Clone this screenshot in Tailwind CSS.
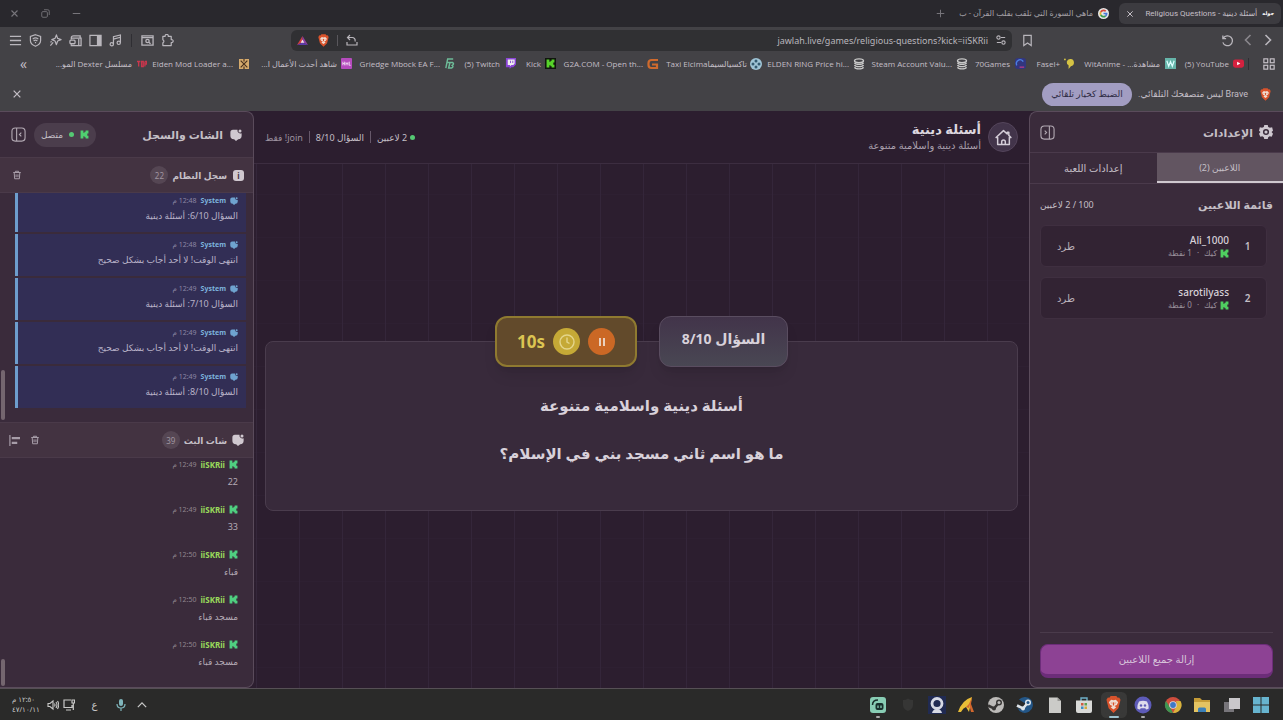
<!DOCTYPE html>
<html lang="ar" dir="rtl">
<head>
  <meta charset="UTF-8" />
  <meta name="viewport" content="width=device-width, initial-scale=1.0" />
  <title>أسئلة دينية - Religious Questions</title>
  <script src="https://cdn.jsdelivr.net/npm/@tailwindcss/browser@4"></script>
</head>
<body class="h-screen overflow-hidden flex flex-col bg-[#434246] text-[#c4bfc6] text-[10px] leading-[15px] font-['Noto_Sans','DejaVu_Sans',sans-serif]">

  <!-- Shared icons -->
  <svg class="hidden">
    <symbol id="kick" viewBox="0 0 16 16"><path fill="currentColor" d="M1 1h5v4h2V3h2V1h5v5h-2v4h2v5h-5v-2H8v-2H6v4H1z" /></symbol>
    <symbol id="brave" viewBox="0 0 16 18">
      <path fill="#d9532c" d="M5 0h6l1.5 1.7L14 1.5 15.5 4l-.5 2-1.8 7L8 18l-5.200-5L1 6 .5 4 2 1.500l1.500.2z" />
      <path fill="#f0dcd2" d="M8 4.500 10.500 4 13 6.500l-1.500 3L9 10.500l2 1.500-3 2.200L5 12l2-1.500-2.500-1L3 6.500 5.500 4z" />
      <path fill="#d9532c" d="m8 6.500 1 .5-.5 3h-1L7 7zM5 6.800l1.500.7L5.500 8zM11 6.800l-1.500.7 1 .5z" />
    </symbol>
    <symbol id="trash" viewBox="0 0 16 16"><path fill="none" stroke="currentColor" stroke-width="1.600" d="M2 4h12M5.500 4V2h5v2M3.500 4l.7 10h7.600l.7-10M6.500 7v4.500M9.500 7v4.500" /></symbol>
    <symbol id="bubble" viewBox="0 0 16 16"><path fill="currentColor" d="M4 1h6a4 4 0 0 0 5.500 4.500V9A4.500 4.500 0 0 1 11 13.500L8 16l-2.500-2.500H5A4.500 4.500 0 0 1 .5 9V4.500A3.500 3.500 0 0 1 4 1z" /><circle cx="13.300" cy="2.700" r="2" fill="currentColor" /></symbol>
    <symbol id="coins" viewBox="0 0 14 14"><g fill="none" stroke="#c9c9c9" stroke-width="1.700"><ellipse cx="7" cy="3.200" rx="5.200" ry="2.200" /><path d="M1.800 5.500C3 8 11 8 12.200 5.500M1.800 8.200c1.200 2.500 9.200 2.500 10.400 0M1.800 10.800c1.200 2.500 9.200 2.500 10.400 0" /></g></symbol>
    <symbol id="chevron" viewBox="0 0 12 12"><path fill="none" stroke="currentColor" stroke-width="1.600" d="m3.500 1 5 5-5 5" /></symbol>
    <symbol id="cross" viewBox="0 0 12 12"><path fill="none" stroke="currentColor" stroke-width="1.500" d="m2 2 8 8M10 2l-8 8" /></symbol>
    <symbol id="drawer" viewBox="0 0 16 16"><g fill="none" stroke="currentColor" stroke-width="1.200"><rect x="1" y="1" width="14" height="14" rx="3.500" /><path d="M10 1v14M5 6l2 2-2 2" /></g></symbol>
  </svg>

  <!-- Tab strip -->
  <div class="h-[27px] shrink-0 bg-[#29282d] flex items-center pr-[2px] pl-[10px] font-['Roboto','DejaVu_Sans',sans-serif]">
    <div class="h-[21px] w-[162px] rounded-md bg-[#3c3b40] flex items-center gap-[5px] px-[7px]">
      <span class="text-[5px] font-bold text-white">جوله</span>
      <span class="flex-1 whitespace-nowrap text-[8px]">أسئلة دينية - Religious Questions</span>
      <button aria-label="إغلاق التبويب"><svg class="size-2"><use href="#cross" /></svg></button>
    </div>
    <div class="flex items-center gap-[5px] mr-[10px] w-[146px]">
      <svg class="size-[11px] shrink-0" viewBox="0 0 22 22"><circle cx="11" cy="11" r="11" fill="#e6e6e6" /><g fill="none" stroke-width="3.400"><path stroke="#d8473a" d="M5.500 8A6.300 6.300 0 0 1 15.500 6.500" /><path stroke="#e0b02c" d="M5.500 8a6.500 6.500 0 0 0 0 6" /><path stroke="#3a9b52" d="M5.500 14a6.300 6.300 0 0 0 9.500 2" /><path stroke="#4678d8" d="M15 16a6.300 6.300 0 0 0 2.300-5H11" /></g></svg>
      <span class="whitespace-nowrap text-[8px] text-[#a5a2a8]">ماهي السورة التي تلقب بقلب القرآن - ب</span>
    </div>
    <button class="mr-[18px] text-[#77757b]" aria-label="تبويب جديد"><svg class="size-[9px]" viewBox="0 0 12 12"><path stroke="currentColor" stroke-width="1.300" d="M6 1v10M1 6h10" /></svg></button>
    <div class="mr-auto flex items-center gap-[22px] text-[#77757b]">
      <button aria-label="تصغير"><svg class="size-[9px]" viewBox="0 0 12 12"><path stroke="currentColor" stroke-width="1.400" d="M1 6h10" /></svg></button>
      <button aria-label="استعادة"><svg class="size-[9px]" viewBox="0 0 12 12"><g fill="none" stroke="currentColor" stroke-width="1.200"><rect x="1" y="3.500" width="7.500" height="7.500" rx="1.500" /><path d="M4 1h5a2 2 0 0 1 2 2v5" /></g></svg></button>
      <button aria-label="إغلاق"><svg class="size-[9px]"><use href="#cross" /></svg></button>
    </div>
  </div>

  <!-- Toolbar -->
  <div class="h-[26px] shrink-0 flex items-center px-[9px] text-[#b9b6bc]">
    <div class="flex items-center gap-[8px]">
      <button aria-label="رجوع"><svg class="size-3"><use href="#chevron" /></svg></button>
      <button aria-label="تقدم" class="text-[#8a878d]"><svg class="size-3 -scale-x-100"><use href="#chevron" /></svg></button>
      <button aria-label="تحديث"><svg class="size-[13px]" viewBox="0 0 14 14"><path fill="none" stroke="currentColor" stroke-width="1.400" d="M2.500 4.500A5.300 5.300 0 1 1 2 9M2 1.500v3.500h3.500" /></svg></button>
    </div>
    <button class="mr-[187px] ml-[9px]" aria-label="إشارة مرجعية"><svg class="size-[13px]" viewBox="0 0 14 14"><path fill="none" stroke="currentColor" stroke-width="1.300" d="M3 1.500h8v11L7 9.800l-4 2.700z" /></svg></button>
    <div class="flex-1 h-[21px] rounded-md bg-[#303033] flex items-center gap-[8px] px-[6px]">
      <svg class="size-[10px]" viewBox="0 0 12 12"><g fill="none" stroke="currentColor" stroke-width="1.300"><path d="M6 3h5M1 9h5" /><circle cx="3" cy="3" r="2" /><circle cx="9" cy="9" r="2" /></g></svg>
      <input class="flex-1 min-w-0 bg-transparent text-right outline-none text-[9px]" dir="ltr" type="text" aria-label="العنوان" value="jawlah.live/games/religious-questions?kick=iiSKRii" />
      <svg class="size-3" viewBox="0 0 12 12"><path fill="none" stroke="currentColor" stroke-width="1.200" d="M4 1 1.500 3.500 4 6M2 3.500h4a3 3 0 0 1 3 4M1 8v3h10V8" /></svg>
      <div class="h-[11px] w-px bg-[#59575c]"></div>
      <svg class="w-[11px] h-[13px]"><use href="#brave" /></svg>
      <svg class="w-[11px] h-[11px] mr-[2px]" viewBox="0 0 12 12"><path fill="#d33e42" d="M6 1 0 11l6-3z" /><path fill="#8c3fa0" d="M6 1v7l6 3z" /><path fill="#5b3aa8" d="m0 11 6-3 6 3z" /><path fill="#f2e6ee" d="m6 5-2 3.500h4z" /></svg>
    </div>
    <div class="mr-[117px] flex items-center gap-[7px]">
      <button aria-label="الإضافات"><svg class="size-[13px]" viewBox="0 0 14 14"><path fill="none" stroke="currentColor" stroke-width="1.300" stroke-linejoin="round" d="M2 2.500h2.500a1.700 1.700 0 1 1 3.300 0H11v3.500a1.700 1.700 0 1 1 0 3.300V12.500H2V9.500a1.700 1.700 0 0 0 0-3.200z" /></svg></button>
      <button aria-label="بحث في الصفحة"><svg class="size-[13px]" viewBox="0 0 14 14"><g fill="none" stroke="currentColor" stroke-width="1.400"><path d="M1 2h12v10H1zM1 4h12" /><circle cx="7" cy="7.500" r="1.800" /><path d="m8.300 8.800 2 1.700" /></g></svg></button>
      <div class="h-[13px] w-px bg-[#2f2e33] mx-[2px]"></div>
      <button aria-label="موسيقى"><svg class="size-[13px]" viewBox="0 0 14 14"><g fill="none" stroke="currentColor" stroke-width="1.300"><circle cx="3" cy="11" r="1.800" /><circle cx="10.500" cy="9.500" r="1.800" /><path d="M4.800 11V3l7.500-2v8.500M4.800 5.500l7.500-2" /></g></svg></button>
      <button aria-label="الشريط الجانبي"><svg class="size-[13px]" viewBox="0 0 14 14"><path fill="none" stroke="currentColor" stroke-width="1.300" d="M1 1.500h12v11H1z" /><path fill="currentColor" d="M8.500 1.500H13v11H8.500z" /></svg></button>
      <button aria-label="المحفظة"><svg class="size-[13px]" viewBox="0 0 14 14"><g fill="none" stroke="currentColor" stroke-width="1.400"><path d="M2.500 6V4Q2.500 2 5 2h7v2.500M2.500 4.500H13v8H2.500V11" /><rect x="1" y="6.500" width="5.500" height="4" rx="1" /><path d="M10.500 5v7" /></g></svg></button>
      <button aria-label="ليو"><svg class="size-[13px]" viewBox="0 0 14 14"><path fill="none" stroke="currentColor" stroke-width="1.300" stroke-linejoin="round" d="m8 1 1.300 3.700L13 6 9.300 7.500 8 11.500 6.500 7.500 3 6l3.500-1.300zM4.500 9 1.500 12.500M3 8l-1.500 1" /></svg></button>
      <button aria-label="VPN"><svg class="size-[13px]" viewBox="0 0 14 14"><g fill="none" stroke="currentColor" stroke-width="1.300"><path d="M7 .8 12.500 2.500V7c0 3-2.500 5-5.500 6.200C4 12 1.500 10 1.500 7V2.500z" /><path d="M4 5.500c1.800-1.500 4.200-1.500 6 0M5 7.500c1.200-1 2.800-1 4 0M7 8.500v1.500" /></g></svg></button>
      <button aria-label="القائمة"><svg class="size-[13px]" viewBox="0 0 14 14"><path stroke="currentColor" stroke-width="1.400" d="M1 2.500h12M1 7h12M1 11.500h12" /></svg></button>
    </div>
  </div>

  <!-- Bookmarks -->
  <nav class="h-[21px] shrink-0 flex items-center pr-[8px] pl-[20px] whitespace-nowrap text-[8px] font-['Open_Sans','DejaVu_Sans',sans-serif]">
    <button aria-label="كل الإشارات" class="ml-[14px]"><svg class="size-[12px]" viewBox="0 0 14 14"><g fill="none" stroke="currentColor" stroke-width="1.400"><rect x="1" y="1" width="4.500" height="4.500" /><rect x="8.500" y="1" width="4.500" height="4.500" /><rect x="1" y="8.500" width="4.500" height="4.500" /><rect x="8.500" y="8.500" width="4.500" height="4.500" /></g></svg></button>
    <div class="h-3 w-px bg-[#2f2e33] ml-[4px]"></div>
    <a href="#" class="w-[68px] flex items-center gap-[4px]"><svg class="size-[11px] shrink-0" viewBox="0 0 12 12"><rect y="1.500" width="12" height="9" rx="2.500" fill="#d4213f" /><path fill="#fff" d="M4.500 4v4L8 6z" /></svg><span dir="ltr">(5) YouTube</span></a>
    <a href="#" class="w-[101px] flex items-center gap-[5px]"><svg class="size-[11px] shrink-0" viewBox="0 0 12 12"><path fill="#66b5aa" d="M0 0h12v12H0z" /><path fill="none" stroke="#dff" stroke-width="1.300" d="m2 3 2 6 2-5 2 5 2-6" /></svg><span dir="ltr">WitAnime - ...مشاهدة</span></a>
    <a href="#" class="w-[49px] flex items-center gap-[4px]"><svg class="size-[11px] shrink-0" viewBox="0 0 12 12"><path fill="#d5c344" d="M3 4a4 4 0 1 1 4.500 5L5 12V8A4 4 0 0 1 3 4z" /><circle cx="1" cy="1.500" r="1" fill="#d5c344" /></svg><span dir="ltr">Fasel+</span></a>
    <a href="#" class="w-[58px] flex items-center gap-[5px]"><svg class="size-[11px] shrink-0" viewBox="0 0 12 12"><rect width="12" height="12" rx="3" fill="#32367e" /><path fill="none" stroke="#4a7ee0" stroke-width="1.500" d="M2 8a4 4 0 0 1 7-4" /><path stroke="#b03a86" stroke-width="1.500" d="M5 10h5" /></svg><span>70Games</span></a>
    <a href="#" class="w-[103px] flex items-center gap-[4px]"><svg class="size-3 shrink-0"><use href="#coins" /></svg><span dir="ltr">Steam Account Valu...</span></a>
    <a href="#" class="w-[103px] flex items-center gap-[4px]"><svg class="size-3 shrink-0"><use href="#coins" /></svg><span dir="ltr">ELDEN RING Price hi...</span></a>
    <a href="#" class="w-[103px] flex items-center gap-[3px]"><svg class="size-3 shrink-0" viewBox="0 0 12 12"><circle cx="6" cy="6" r="6" fill="#9fc4d6" /><g fill="#335a70"><circle cx="6" cy="3" r="1.500" /><circle cx="6" cy="9" r="1.500" /><circle cx="3" cy="6" r="1.500" /><circle cx="9" cy="6" r="1.500" /></g></svg><span dir="ltr">Taxi Elcimaتاكسيالسيما</span></a>
    <a href="#" class="w-[103px] flex items-center gap-[4px]"><svg class="size-3 shrink-0" viewBox="0 0 12 12"><path fill="none" stroke="#cf6a2d" stroke-width="2.200" d="M11 2H4.500A3 3 0 0 0 1.500 5v2a3 3 0 0 0 3 3H10V6.500H5" /></svg><span dir="ltr">G2A.COM - Open th...</span></a>
    <a href="#" class="w-[40px] flex items-center gap-[4px]"><svg class="size-[11px] shrink-0 bg-[#10160d] text-[#57d32a] p-px"><use href="#kick" /></svg><span>Kick</span></a>
    <a href="#" class="w-[61px] flex items-center gap-[5px]"><svg class="size-[11px] shrink-0" viewBox="0 0 12 12"><path fill="#8b45d6" d="M1 0h11v7l-3 3H7l-2 2v-2H1z" /><path fill="#eee" d="M3 1.500h7.500V6L9 7.500H7L5.500 9V7.500H3z" /><path stroke="#8b45d6" d="M6 3v2.500M8.500 3v2.500" /></svg><span dir="ltr">(5) Twitch</span></a>
    <a href="#" class="w-[103px] flex items-center gap-[4px]"><svg class="size-[11px] shrink-0" viewBox="0 0 12 12"><path fill="none" stroke="#6dbb98" stroke-width="1.600" d="M2 11 4 1h6M3 5h4M5 11l1.500-6H9.500q2 1.500-.5 3 2 1.500-1 3z" /></svg><span dir="ltr">Griedge Mbock EA F...</span></a>
    <a href="#" class="w-[103px] flex items-center gap-[4px]"><svg class="size-[11px] shrink-0" viewBox="0 0 12 12"><rect width="12" height="12" rx="1" fill="#b54bbd" /><path fill="none" stroke="#f0d5f2" d="M2 4v4M2 6h2M4 4v4M5.500 8V5l1 1.500 1-1.500v3M9 4v4h1.500" /></svg><span>شاهد أحدث الأعمال ا...</span></a>
    <a href="#" class="w-[102px] flex items-center gap-[6px]"><svg class="size-[10px] shrink-0" viewBox="0 0 12 12"><path fill="#d5aa6c" d="M0 0h12v12H0z" /><path fill="none" stroke="#47301e" stroke-width="1.400" d="m2 2 8 8M10 2 2 10M6 0v3M6 9v3" /></svg><span dir="ltr">Elden Mod Loader a...</span></a>
    <a href="#" class="w-[88px] flex items-center gap-[5px]"><svg class="w-[10px] h-[8px] shrink-0" viewBox="0 0 12 8"><path fill="none" stroke="#c8364c" stroke-width="1.600" d="M0 1h4M2 1v6M5.500 1v6h2V1zM9.500 1v6M9.500 1h2v3h-2" /></svg><span>مسلسل Dexter المو...</span></a>
    <button aria-label="المزيد" class="mr-auto text-[14px]">»</button>
  </nav>

  <!-- Default browser prompt -->
  <div class="h-[37px] shrink-0 flex items-center px-[12px] pt-[3px] font-['Roboto','DejaVu_Sans',sans-serif]">
    <svg class="w-[11px] h-[13px]"><use href="#brave" /></svg>
    <p class="mr-[12px] text-[9px]">Brave ليس متصفحك التلقائي.</p>
    <button class="mr-[6px] h-[23px] w-[90px] rounded-full bg-[#a29dc2] text-[#2e2b44] text-[9px] whitespace-nowrap">الضبط كخيار تلقائي</button>
    <button aria-label="إغلاق التنبيه" class="mr-auto"><svg class="size-[10px]"><use href="#cross" /></svg></button>
  </div>

  <!-- Game -->
  <div class="flex-1 min-h-0 flex bg-[#2c1e2f]">

    <!-- Settings panel -->
    <aside class="w-[254px] shrink-0 flex flex-col bg-[#3a2b3b] border border-r-0 border-[#5a4b5b] rounded-l-lg overflow-hidden">
      <div class="h-10 flex items-center px-[10px]">
        <svg class="size-[14px] text-[#cfc8d0]" viewBox="0 0 16 16"><path fill="currentColor" d="M6 0h4l.5 2.200 2 1L15 2.500l1 4-1.700 1.500L16 10l-1.500 3.500-2.300-.6-1.700 1L10 16H6l-.5-2.100-1.700-1-2.300.6L0 10l1.700-2L0 6.500l1-4 2.500.7 2-1z" /><circle cx="8" cy="8" r="3.500" fill="#3a2b3b" /><circle cx="8" cy="8" r="1.800" fill="currentColor" /></svg>
        <h2 class="mr-[6px] text-[11px] font-semibold">الإعدادات</h2>
        <button aria-label="طي الإعدادات" class="mr-auto"><svg class="size-[15px] text-[#b0a7b1]"><use href="#drawer" /></svg></button>
      </div>
      <div class="flex h-8 border-y border-[#4a3a4b]">
        <button class="flex-1 bg-[#625561] border-b-2 border-[#cfc8cf] text-[9px]">اللاعبين (2)</button>
        <button class="flex-1">إعدادات اللعبة</button>
      </div>
      <div class="flex items-center justify-between h-[41px] px-[10px]">
        <h3 class="text-[11px] font-semibold">قائمة اللاعبين</h3>
        <span class="text-[9px]">100 / 2 لاعبين</span>
      </div>
      <ul id="players" class="flex-1 flex flex-col gap-[10px] pr-[16px] pl-[10px]"></ul>
      <div class="mx-[10px] pt-[11px] pb-[9px] border-t border-[#4a3b4b]">
        <button class="block w-full h-[34px] rounded-lg bg-[#8d4294] border border-b-4 border-[#6c2d79] text-[#d8c5db]">إزالة جميع اللاعبين</button>
      </div>
    </aside>

    <!-- Board -->
    <main class="flex-1 min-w-0 flex flex-col">
      <header class="h-[53px] shrink-0 flex items-center px-[11px] border-b border-[#3c2d40]">
        <a href="#" aria-label="الرئيسية" class="size-[30px] rounded-full bg-[#42344a] border border-[#54455b] flex items-center justify-center">
          <svg class="size-[17px]" viewBox="0 0 16 16"><path fill="none" stroke="#d4cdd8" stroke-width="1.400" stroke-linejoin="round" d="M1 8 8 1.500l3.500 3.200V3H13v3l2 2h-1.500v6.500h-11V8zM6.300 14.500V12a1.700 1.700 0 0 1 3.400 0v2.500" /></svg>
        </a>
        <div class="mr-[7px]">
          <h1 class="text-[13px] leading-[17px] font-bold text-[#dcd6de]">أسئلة دينية</h1>
          <p class="text-[#aaa0ad]">أسئلة دينية واسلامية متنوعة</p>
        </div>
        <div class="mr-auto flex items-center gap-[6px] text-[9px]">
          <span class="flex items-center gap-[3px]"><i class="size-[5px] rounded-full bg-[#55c873]"></i>2 لاعبين</span>
          <i class="w-px h-3 bg-[#66586a]"></i>
          <span>السؤال 8/10</span>
          <i class="w-px h-3 bg-[#66586a]"></i>
          <span class="text-[#9c919f]">join! فقط</span>
        </div>
      </header>

      <div class="flex-1 flex items-center px-[11px] bg-[linear-gradient(to_right,#34263a_1px,transparent_1px),linear-gradient(to_bottom,#2e2032_1px,transparent_1px)] bg-[size:43px_43px] bg-[position:2px_30px]">
        <section class="relative w-full h-[170px] rounded-lg bg-[#382a3b] border border-[#4a3c4d] flex flex-col items-center pt-[51px] gap-[24px] font-bold text-[15px] leading-6 text-[#d8d1da]">
          <div class="absolute inset-x-0 -top-[26px] flex justify-center gap-[22px]">
            <div class="w-[129px] h-[51px] rounded-xl bg-linear-to-b from-[#42344a] to-[#494753] border border-[#5a4d60] shadow-lg flex justify-center pt-[10px] text-[14px]">السؤال 8/10</div>
            <div class="w-[142px] h-[51px] rounded-xl bg-[#624a2b] border-2 border-[#8f7a30] shadow-lg flex items-center justify-center gap-[8px]">
              <button aria-label="إيقاف مؤقت" class="size-[27px] rounded-full bg-[#cb6825] flex items-center justify-center gap-[2px]"><i class="w-[2px] h-2 bg-[#ead0bd]"></i><i class="w-[2px] h-2 bg-[#ead0bd]"></i></button>
              <div class="size-[27px] rounded-full bg-[#c5a936] flex items-center justify-center"><svg class="size-4" viewBox="0 0 16 16"><g fill="none" stroke="#e4d58a" stroke-width="1.400"><circle cx="8" cy="8" r="7" /><path d="M8 3.500V8l2.500 1.500" /></g></svg></div>
              <span class="text-[17px] text-[#dcc552]">10s</span>
            </div>
          </div>
          <h2>أسئلة دينية واسلامية متنوعة</h2>
          <p>ما هو اسم ثاني مسجد بني في الإسلام؟</p>
        </section>
      </div>
    </main>

    <!-- Chat and log panel -->
    <aside class="w-[254px] shrink-0 flex flex-col bg-[#3a2b3b] border border-l-0 border-[#5a4b5b] rounded-r-lg overflow-hidden">
      <div class="h-[45px] shrink-0 flex items-center px-[11px]">
        <svg class="size-3 text-[#cfc8d0]"><use href="#bubble" /></svg>
        <h2 class="mr-[7px] text-[11px] font-semibold">الشات والسجل</h2>
        <span class="mr-auto h-6 px-[5px] w-[62px] rounded-full bg-[#4b3d4c] flex items-center justify-center gap-[6px] text-[9px]"><svg class="size-[9px] text-[#4fcf70]"><use href="#kick" /></svg><i class="size-[5px] rounded-full bg-[#55c873]"></i>متصل</span>
        <button aria-label="طي الشات" class="mr-[8px]"><svg class="size-[15px] text-[#b0a7b1] -scale-x-100"><use href="#drawer" /></svg></button>
      </div>

      <div class="h-[36px] shrink-0 flex items-center px-[9px] bg-[#433341] border-y border-[#4a3a49]">
        <span class="size-[11px] rounded-[3px] bg-[#d0c8cf] text-[#433341] text-[8px] font-bold flex items-center justify-center">i</span>
        <h3 class="mr-[6px] text-[9px] font-bold">سجل النظام</h3>
        <span class="mr-[4px] size-[18px] rounded-full bg-[#554653] text-[8px] text-[#a095a0] flex items-center justify-center">22</span>
        <button aria-label="مسح السجل" class="mr-auto ml-[3px]"><svg class="size-[10px] text-[#a79da8]"><use href="#trash" /></svg></button>
      </div>
      <div class="relative flex-1 min-h-0 overflow-hidden flex flex-col justify-end pb-[14px]">
        <ul id="systemLog" class="flex flex-col gap-[2px] pr-[7px] pl-[15px]"></ul>
        <i class="absolute left-[1px] bottom-[2px] w-1 h-[50px] rounded-full bg-[#74666f]"></i>
      </div>

      <div class="h-[36px] shrink-0 flex items-center px-[9px] bg-[#433341] border-y border-[#4a3a49]">
        <svg class="size-3 text-[#d0c8cf]"><use href="#bubble" /></svg>
        <h3 class="mr-[5px] text-[9px] font-bold">شات البث</h3>
        <span class="mr-[4px] size-[18px] rounded-full bg-[#554653] text-[8px] text-[#a095a0] flex items-center justify-center">39</span>
        <button aria-label="مسح الشات" class="mr-auto"><svg class="size-[10px] text-[#a79da8]"><use href="#trash" /></svg></button>
        <button aria-label="محاذاة" class="mr-[10px]"><svg class="size-[11px] text-[#a79da8]" viewBox="0 0 12 12"><path stroke="currentColor" stroke-width="1.300" d="M1 0v12" /><path stroke="currentColor" stroke-width="2.500" d="M3 3.500h9M3 8.500h6" /></svg></button>
      </div>
      <div class="relative basis-[229px] shrink-0 overflow-hidden flex flex-col justify-end pb-[11px]">
        <ul id="chatLog" class="flex flex-col gap-[3px] pr-[15px] pl-[14px]"></ul>
        <i class="absolute left-[1px] bottom-[1px] w-1 h-[27px] rounded-full bg-[#74666f]"></i>
      </div>
    </aside>
  </div>

  <!-- Taskbar -->
  <footer class="h-8 shrink-0 bg-[#2a2a29] border-t border-[#565055] flex items-center justify-between pr-[13px] pl-[12px]">
    <div class="w-[401px] flex items-center justify-between">
      <svg class="size-[18px]" viewBox="0 0 18 18"><path fill="#67b4cf" d="M1 1h7.500v7.500H1zM9.500 1H17v7.500H9.500zM1 9.500h7.500V17H1zM9.500 9.500H17V17H9.500z" /></svg>
      <svg class="size-[18px]" viewBox="0 0 18 18"><path fill="#77757a" d="M1 6h10v10H1z" /><path fill="#c9c7ca" d="M6 2h11v11H6z" /></svg>
      <svg class="size-[18px]" viewBox="0 0 18 18"><path fill="#c59c37" d="M1 2h6l2 2h8v12H1z" /><path fill="#e3c362" d="M1 6h16v10H1z" /><path fill="#3b80b8" d="M5 16v-3q0-1.500 1.500-1.500h5Q13 11.500 13 13v3z" /></svg>
      <svg class="size-[18px]" viewBox="0 0 18 18"><circle cx="9" cy="9" r="8" fill="#ce4d3d" /><path fill="#3c9652" d="M2 5 7 13l2 4A8 8 0 0 1 2 5z" /><path fill="#d9b33d" d="M9 17 13 9l-1-4h4.500A8 8 0 0 1 9 17z" /><circle cx="9" cy="9" r="3.800" fill="#ddd" /><circle cx="9" cy="9" r="2.900" fill="#3f78c8" /></svg>
      <span class="relative size-[18px]"><svg class="size-[18px]" viewBox="0 0 18 18"><circle cx="9" cy="9" r="8.500" fill="#5d5bb8" /><path fill="#dddcec" d="M5 5.500q4-1.500 8 0 2 3.500 1.700 7-1.500 1-2.700 1l-.7-1.200H6.700L6 13.500q-1.200 0-2.700-1Q3 9 5 5.500z" /><g fill="#5d5bb8"><circle cx="7" cy="9.500" r="1.200" /><circle cx="11" cy="9.500" r="1.200" /></g></svg><i class="absolute -bottom-[4px] left-[7px] w-1 h-[2px] rounded-full bg-[#aaa]"></i></span>
      <span class="relative size-[18px] flex items-center justify-center ring-4 ring-[#393938] bg-[#393938] rounded-xs"><svg class="w-[15px] h-[17px]"><use href="#brave" /></svg><i class="absolute -bottom-[4px] left-[4px] w-[10px] h-[2px] rounded-full bg-[#9cc3d0]"></i></span>
      <svg class="size-[18px]" viewBox="0 0 18 18"><path fill="none" stroke="#6fb0c8" stroke-width="1.400" d="M6 5V2h6v3" /><path fill="#d9dad8" d="M1 4.500h16V15q0 2-2 2H3q-2 0-2-2z" /><path fill="#cf5a41" d="M6 7h2.500v2.500H6z" /><path fill="#5ea354" d="M9.500 7H12v2.500H9.500z" /><path fill="#3e8fc4" d="M6 10.500h2.500V13H6z" /><path fill="#d8ab3c" d="M9.500 10.500H12V13H9.500z" /></svg>
      <svg class="size-[18px]" viewBox="0 0 18 18"><path fill="#cbcbc8" d="M3 1.500h8.500L15 5v12H3z" /><path fill="#979794" d="M11.500 1.500 15 5h-3.500z" /></svg>
      <svg class="size-[18px]" viewBox="0 0 18 18"><path fill="#235687" d="M3 3.500A8 8 0 1 1 1.500 12l5 2 5-5z" /><path fill="none" stroke="#dde4ea" stroke-width="2.600" d="m1 9.500 6 3 5-6" /><circle cx="12" cy="6.500" r="3" fill="#dde4ea" /><circle cx="12" cy="6.500" r="1.500" fill="#235687" /><circle cx="7" cy="12.500" r="2" fill="#dde4ea" /></svg>
      <svg class="size-[18px]" viewBox="0 0 18 18"><circle cx="9" cy="9" r="8" fill="#bdbbb9" /><path fill="none" stroke="#383635" stroke-width="2.600" d="m1 9.500 6 3 5-6" /><circle cx="12" cy="6.500" r="3" fill="#383635" /><circle cx="12" cy="6.500" r="1.500" fill="#bdbbb9" /><circle cx="7" cy="12.500" r="2" fill="#383635" /></svg>
      <svg class="size-[18px]" viewBox="0 0 18 18"><path fill="#e8bd37" d="M1 16Q5 4 15 1l-3 15-3-5q-3 1-5 5z" /><path fill="#d2672d" d="M15 1 12 8l2 8h3L14 8zM9 11l3-3v4z" /></svg>
      <svg class="size-[18px]" viewBox="0 0 18 18"><path fill="#202a52" d="M0 0h18v18H0z" /><circle cx="9" cy="7.500" r="5" fill="none" stroke="#d6d9e4" stroke-width="2.800" /><path fill="#d6d9e4" d="M4 17q1-4 5-4t5 4z" /></svg>
      <svg class="size-[18px]" viewBox="0 0 18 18"><path fill="#363635" d="M4 4q3 0 5-1.500Q11 4 14 4v5q0 4-5 6-5-2-5-6z" /></svg>
      <span class="relative size-[18px]"><svg class="size-[18px]" viewBox="0 0 18 18"><rect x="1" y="1" width="16" height="16" rx="3" fill="#88cdb4" /><rect x="6.500" y="7" width="8" height="7" rx="2" fill="#18302c" /><path fill="none" stroke="#18302c" stroke-width="1.500" d="M3.500 9q0-5 5.500-5" /><path stroke="#88cdb4" stroke-width="1.300" d="M9 9.500V12M12 9.500V12" /></svg><i class="absolute -bottom-[4px] left-[7px] w-1 h-[2px] rounded-full bg-[#aaa]"></i></span>
    </div>
    <div class="flex items-center text-[#c9c9c8]">
      <svg class="size-[10px]" viewBox="0 0 12 12"><path fill="none" stroke="currentColor" stroke-width="1.500" d="m1 8.500 5-5 5 5" /></svg>
      <svg class="size-3 mr-[10px]" viewBox="0 0 12 12"><rect x="4" y="0" width="4" height="7" rx="2" fill="#7fb5bb" /><path fill="none" stroke="#7fb5bb" stroke-width="1.200" d="M2 5q0 4 4 4t4-4M6 9v3" /></svg>
      <span class="mr-[16px] w-[9px] text-center">ع</span>
      <svg class="size-3 mr-[15px]" viewBox="0 0 12 12"><path fill="none" stroke="currentColor" stroke-width="1.200" d="M8 1H1v7.500h8V6M3 11h5M9 1h2.500v3H9zM10.300 4v7" /></svg>
      <svg class="size-3 mr-[4px]" viewBox="0 0 12 12"><path fill="none" stroke="currentColor" stroke-width="1.100" d="M1 4.500v3h2L6 10V2L3 4.500zM7.500 4.500q1 1.500 0 3M9 3q2 3 0 6M10.500 2q2.500 4 0 8" /></svg>
      <div class="mr-[7px] w-[28px] text-[7px] leading-[10px] whitespace-nowrap text-left"><div>١٢:٥٠ م</div><div dir="ltr">٤٧/١٠/١١</div></div>
    </div>
  </footer>

  <script>
    const players = [
      { name: "Ali_1000", points: 1 },
      { name: "sarotilyass", points: 0 },
    ];

    const systemLog = [
      { time: "12:48 م", text: "السؤال 6/10: أسئلة دينية" },
      { time: "12:48 م", text: "انتهى الوقت! لا أحد أجاب بشكل صحيح" },
      { time: "12:49 م", text: "السؤال 7/10: أسئلة دينية" },
      { time: "12:49 م", text: "انتهى الوقت! لا أحد أجاب بشكل صحيح" },
      { time: "12:49 م", text: "السؤال 8/10: أسئلة دينية" },
    ];

    const chatLog = [
      { time: "12:49 م", text: "22" },
      { time: "12:49 م", text: "33" },
      { time: "12:50 م", text: "قباء" },
      { time: "12:50 م", text: "مسجد قباء" },
      { time: "12:50 م", text: "مسجد قباء" },
    ];

    document.getElementById("players").innerHTML = players.map((p, i) => `
      <li class="h-[42px] rounded-md bg-[#322333] border border-[#3f2f40] flex items-center pr-[14px] pl-[16px]">
        <span class="w-[9px] text-center font-semibold">${i + 1}</span>
        <div class="mr-[14px]">
          <div class="text-[10px] leading-[14px] font-medium text-[#d8d1d9]">${p.name}</div>
          <div class="flex items-center gap-[3px] text-[8px] leading-[12px] text-[#9b909c]">
            <svg class="size-[9px] text-[#4fcf60]"><use href="#kick" /></svg>كيك <span class="mx-[2px]">·</span> ${p.points} نقطة
          </div>
        </div>
        <button class="mr-auto text-[#b8afb9]">طرد</button>
      </li>`).join("");

    document.getElementById("systemLog").innerHTML = systemLog.map(m => `
      <li class="h-[42px] bg-[#322e55] border-l-3 border-[#6d9dcc] pt-[3px] pr-[8px]">
        <div class="flex items-center gap-[4px] text-[7px]">
          <svg class="size-2 text-[#6fa3cf]"><use href="#bubble" /></svg>
          <b class="text-[#7db4dd]">System</b>
          <time class="text-[#8c86a3]">${m.time}</time>
        </div>
        <p class="text-[9px] whitespace-nowrap text-[#b8b2c8]">${m.text}</p>
      </li>`).join("");

    document.getElementById("chatLog").innerHTML = chatLog.map(m => `
      <li class="h-[42px] pt-[3px] flex flex-col gap-[2px]">
        <div class="flex items-center gap-[4px] text-[7px]">
          <svg class="size-[9px] text-[#4fcf80]"><use href="#kick" /></svg>
          <b class="text-[8px] text-[#9bdc5c]">iiSKRii</b>
          <time class="text-[#91868f]">${m.time}</time>
        </div>
        <p class="text-[9px] text-[#b4aab5]">${m.text}</p>
      </li>`).join("");
  </script>
</body>
</html>
